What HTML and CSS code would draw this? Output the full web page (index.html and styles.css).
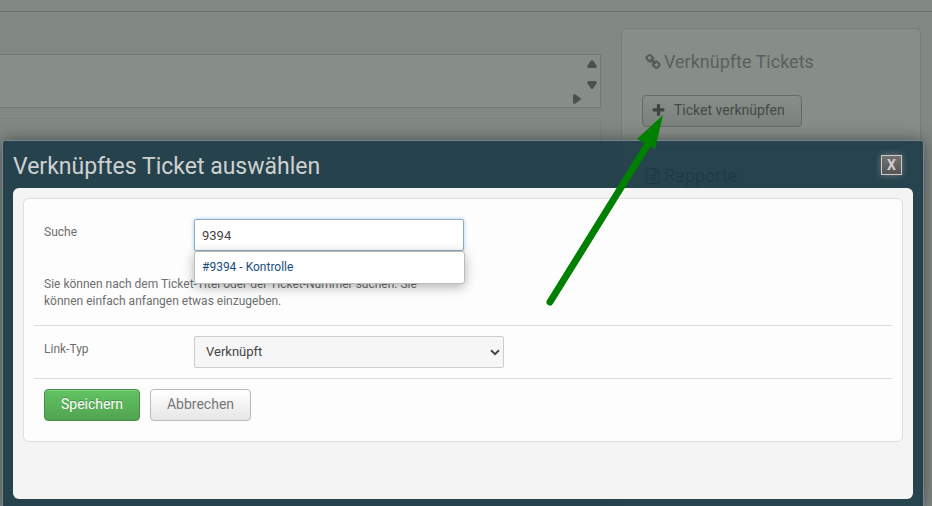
FILE: index.html
```html
<!DOCTYPE html>
<html lang="de">
<head>
<meta charset="utf-8">
<title>Verknüpftes Ticket auswählen</title>
<link rel="stylesheet" href="styles.css">
</head>
<body>
<div class="page">
  <header class="topbar"></header>
  <div class="columns">
    <main class="content">
      <div class="scrollbox">
        <div class="scroll-y">
          <svg class="tri" viewBox="0 0 10 8"><path d="M4 .6Q5-.4 6 .6L9.600 5.500Q10 8 8.500 8H1.500Q0 8 .4 5.500Z"/></svg>
          <svg class="tri" viewBox="0 0 10 8"><path d="M4 7.400Q5 8.400 6 7.400L9.600 2.500Q10 0 8.500 0H1.500Q0 0 .4 2.500Z"/></svg>
        </div>
        <div class="scroll-x">
          <svg class="tri-side" viewBox="0 0 8 10"><path d="M7.400 4Q8.400 5 7.400 6L2.500 9.600Q0 10 0 8.500V1.500Q0 0 2.500 .4Z"/></svg>
        </div>
      </div>
      <div class="box"></div>
    </main>
    <aside class="sidebar">
      <section class="side-section">
        <h2 class="side-title"><svg class="title-icon" viewBox="0 0 1792 1792"><path class="chain" d="M1520 1216q0-40-28-68l-208-208q-28-28-68-28-42 0-72 32 3 3 19 18.500t21.500 21.500 15 19 13 25.500 3.500 27.500q0 40-28 68t-68 28q-15 0-27.500-3.500t-25.500-13-19-15-21.500-21.500-18.500-19q-33 31-33 73 0 40 28 68l206 207q27 27 68 27 40 0 68-26l147-146q28-28 28-67zm-703-705q0-40-28-68l-206-207q-28-28-68-28-39 0-68 27l-147 146q-28 28-28 67 0 40 28 68l208 208q27 27 68 27 42 0 72-31-3-3-19-18.500t-21.500-21.500-15-19-13-25.500-3.500-27.500q0-40 28-68t68-28q15 0 27.500 3.500t25.500 13 19 15 21.500 21.500 18.500 19q33-31 33-73zm895 705q0 120-85 203l-147 146q-83 83-203 83-121 0-204-85l-206-207q-83-83-83-203 0-123 88-209l-88-88q-86 88-208 88-120 0-204-84l-208-208q-84-84-84-204t85-203l147-146q83-83 203-83 121 0 204 85l206 207q83 83 83 203 0 123-88 209l88 88q86-88 208-88 120 0 204 84l208 208q84 84 84 204z"/></svg>Verknüpfte Tickets</h2>
        <button class="link-button" type="button"><svg class="plus-icon" viewBox="0 0 1792 1792"><path d="M1600 736v192q0 40-28 68t-68 28h-416v416q0 40-28 68t-68 28h-192q-40 0-68-28t-28-68v-416h-416q-40 0-68-28t-28-68v-192q0-40 28-68t68-28h416v-416q0-40 28-68t68-28h192q40 0 68 28t28 68v416h416q40 0 68 28t28 68z"/></svg>Ticket verknüpfen</button>
      </section>
      <section class="side-section">
        <h2 class="side-title"><svg class="title-icon" viewBox="0 0 1792 1792"><path d="M1596 380q28 28 48 76t20 88v1152q0 40-28 68t-68 28h-1344q-40 0-68-28t-28-68v-1600q0-40 28-68t68-28h896q40 0 88 20t76 48zm-444-244v376h376q-10-29-22-41l-313-313q-12-12-41-22zm384 1528v-1024h-416q-40 0-68-28t-28-68v-416h-768v1536h1280zm-1024-864q0-14 9-23t23-9h704q14 0 23 9t9 23v64q0 14-9 23t-23 9h-704q-14 0-23-9t-9-23v-64zm736 224q14 0 23 9t9 23v64q0 14-9 23t-23 9h-704q-14 0-23-9t-9-23v-64q0-14 9-23t23-9h704zm0 256q14 0 23 9t9 23v64q0 14-9 23t-23 9h-704q-14 0-23-9t-9-23v-64q0-14 9-23t23-9h704z"/></svg>Rapporte</h2>
      </section>
    </aside>
  </div>
</div>

<div class="modal" role="dialog" aria-labelledby="modal-title">
  <div class="modal-head">
    <h1 class="modal-title" id="modal-title">Verknüpftes Ticket auswählen</h1>
    <button class="close" type="button">X</button>
  </div>
  <div class="modal-body">
    <form class="form">
      <div class="search-row">
        <div class="field">
          <label class="label" for="search">Suche</label>
          <div class="autocomplete">
            <input class="search" id="search" type="text" value="9394" autocomplete="off">
            <ul class="suggestions">
              <li><a class="suggestion" href="#9394">#9394 - Kontrolle</a></li>
            </ul>
          </div>
        </div>
        <p class="help">Sie können nach dem Ticket-Titel oder der Ticket-Nummer suchen. Sie können einfach anfangen etwas einzugeben.</p>
      </div>
      <div class="row field">
        <label class="label" for="type">Link-Typ</label>
        <div class="select-wrap">
          <select class="select" id="type"><option>Verknüpft</option></select>
          <svg class="chevron" viewBox="0 0 10 7"><path d="M1 1.200 5 5.200 9 1.200"/></svg>
        </div>
      </div>
      <div class="row actions">
        <button class="btn btn-save" type="submit">Speichern</button>
        <button class="btn btn-cancel" type="button">Abbrechen</button>
      </div>
    </form>
  </div>
</div>

<svg class="arrow" viewBox="0 0 120 194" aria-hidden="true">
  <path class="arrow-line" d="M5 188 103 30"/>
  <path class="arrow-head" d="M118 1 92 25 110 35Z"/>
</svg>
</body>
</html>
```
FILE: styles.css
```css
* {
  box-sizing: border-box;
}

body {
  margin: 0;
  height: 100vh;
  overflow: hidden;
  position: relative;
  background: #828983;
  color: #6e6e6e;
  font-family: Roboto, "Liberation Sans", sans-serif;
  font-size: 12px;
}

h1, h2, p, ul {
  margin: 0;
  padding: 0;
  font-weight: 400;
}

button, input, select {
  font-family: inherit;
  margin: 0;
}

/* Dimmed page */
.page {
  display: flex;
  flex-direction: column;
  min-height: 100vh;
}

.topbar {
  height: 12px;
  border-bottom: 1px solid #68706b;
}

.columns {
  flex: 1;
  display: flex;
  gap: 20px;
  padding: 16px 11px 0 0;
}

.content {
  flex: 1;
  display: flex;
  flex-direction: column;
  gap: 10px;
  padding-top: 26px;
}

.scrollbox {
  display: flex;
  flex-direction: column;
  justify-content: space-between;
  height: 54px;
  padding: 5px 3px 3px 0;
  border: 1px solid #717973;
  border-left: 0;
  background: #878e88;
}

.scroll-y {
  display: flex;
  flex-direction: column;
  align-items: flex-end;
  gap: 13px;
}

.scroll-x {
  display: flex;
  justify-content: flex-end;
  padding-right: 16px;
}

.tri {
  width: 10px;
  height: 8px;
  fill: #4b524e;
}

.tri-side {
  width: 8px;
  height: 10px;
  fill: #4b524e;
}

.box {
  flex: 1;
  border: 1px solid #7a827c;
  border-width: 1px 1px 0 0;
}

.sidebar {
  width: 300px;
  padding: 20px;
  border: 1px solid #767e78;
  border-bottom: 0;
  border-radius: 5px 5px 0 0;
  background: #878e88;
}

.side-section + .side-section {
  margin-top: 20px;
  padding-top: 15px;
  border-top: 1px solid #69716c;
}

.side-title {
  display: flex;
  align-items: center;
  gap: 3px;
  padding-left: 3px;
  color: #59615d;
  font-size: 18px;
  line-height: 26px;
}

.title-icon {
  width: 16px;
  height: 16px;
  fill: #525a56;
}

.chain {
  stroke: #525a56;
  stroke-width: 50;
}

.link-button {
  display: flex;
  align-items: center;
  gap: 8px;
  height: 32px;
  margin-top: 20px;
  padding: 0 16px 2px 8px;
  border: 1px solid #656c68;
  border-radius: 4px;
  background: linear-gradient(#878e88, #7b827c);
  color: #424a47;
  font-size: 14px;
}

.plus-icon {
  width: 15px;
  height: 15px;
  fill: #3d4543;
}

/* Dialog */
.modal {
  position: absolute;
  top: 140px;
  left: 2px;
  right: 8px;
  padding: 0 10px 10px;
  border: 1px solid #72868b;
  border-radius: 3px;
  background: rgba(15, 50, 64, 0.8);
  box-shadow: 0 0 16px rgba(50, 50, 50, 0.7);
}

.modal-head {
  display: flex;
  align-items: center;
  justify-content: space-between;
  height: 47px;
  padding: 0 11px 0 0;
}

.modal-title {
  padding-top: 4px;
  color: #cfd1d1;
  font-size: 23px;
  line-height: 28px;
}

.close {
  width: 21px;
  height: 20px;
  padding: 0;
  border: 1px solid #cbcbcb;
  background: linear-gradient(#717171, #555);
  box-shadow: 0 0 6px rgba(190, 180, 180, 0.5);
  color: #cfcfcf;
  font-size: 14px;
  font-weight: 700;
  line-height: 18px;
}

.modal-body {
  padding: 10px 10px 57px;
  border-radius: 6px;
  background: #f4f4f4;
}

.form {
  padding: 10px;
  border: 1px solid #dedede;
  border-radius: 6px;
  background: #fdfdfd;
}

.field {
  display: flex;
}

.row {
  padding: 10px;
  border-top: 1px solid #dcdcdc;
}

.search-row {
  padding: 10px 10px 15px;
}

.label {
  width: 150px;
  padding-top: 4px;
  line-height: 18px;
}

.autocomplete {
  position: relative;
  width: 270px;
}

.search {
  display: block;
  width: 100%;
  height: 32px;
  padding: 0 7px;
  border: 1px solid #8eabc1;
  border-radius: 2px;
  outline: 0;
  background: #fff;
  box-shadow: 0 0 4px #a9cdf0;
  color: #444;
  font-size: 13px;
}

.suggestions {
  position: absolute;
  top: 32px;
  left: 0;
  right: -1px;
  border: 1px solid #bbb;
  border-radius: 3px;
  background: #fff;
  box-shadow: 0 3px 12px rgba(0, 0, 0, 0.3);
  list-style: none;
}

.suggestion {
  display: block;
  padding: 7px;
  color: #174e80;
  line-height: 17px;
  text-decoration: none;
}

.help {
  width: 400px;
  margin-top: 25px;
  line-height: 17px;
}

.select-wrap {
  position: relative;
  width: 310px;
}

.select {
  display: block;
  width: 100%;
  height: 32px;
  padding: 0 11px 2px;
  border: 1px solid #ccc;
  border-radius: 2px;
  appearance: none;
  background: #f6f6f6;
  color: #444;
  font-size: 13px;
}

.chevron {
  position: absolute;
  top: 13px;
  right: 4px;
  width: 10px;
  height: 7px;
  fill: none;
  stroke: #444;
  stroke-width: 2;
  pointer-events: none;
}

.actions {
  display: flex;
  gap: 10px;
}

.btn {
  height: 32px;
  padding: 0 16px 2px;
  border: 1px solid;
  border-radius: 4px;
  font-size: 14px;
}

.btn-save {
  border-color: #459148;
  background: linear-gradient(#62c462, #51a351);
  box-shadow: inset 0 1px 0 rgba(255, 255, 255, 0.2);
  color: #fff;
  text-shadow: 0 -1px 0 rgba(0, 0, 0, 0.25);
}

.btn-cancel {
  border-color: #bbb;
  background: linear-gradient(#fff, #e6e6e6);
  color: #777;
}

/* Pointer annotation over the dialog and page */
.arrow {
  position: absolute;
  top: 114px;
  left: 545px;
  width: 120px;
  height: 194px;
  pointer-events: none;
}

.arrow-line {
  stroke: #008000;
  stroke-width: 7;
  stroke-linecap: round;
}

.arrow-head {
  fill: #008000;
}
```
